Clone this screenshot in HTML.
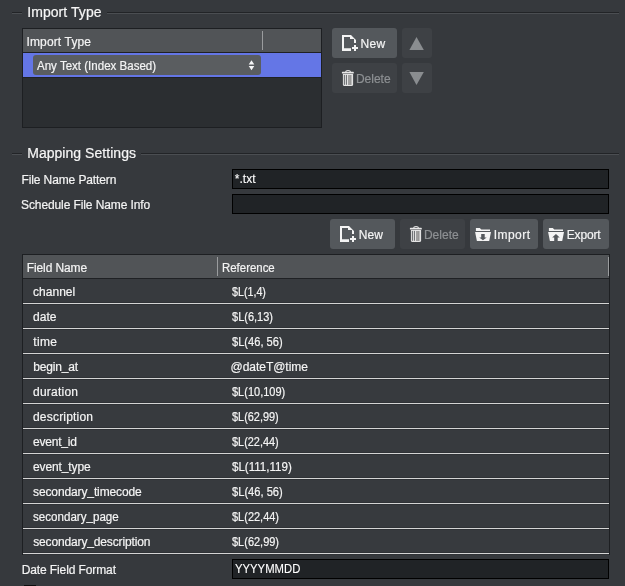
<!DOCTYPE html>
<html><head><meta charset="utf-8">
<style>
html,body{margin:0;padding:0;}
body{width:625px;height:586px;overflow:hidden;background:#36393d;position:relative;font-family:"Liberation Sans",sans-serif;color:#f2f2f2;}
.a{position:absolute;}
.t{position:absolute;white-space:nowrap;line-height:1;transform:translateZ(0);}
.gd{position:absolute;height:1px;background:#222427;}
.gl{position:absolute;height:1px;background:#4b4e52;}
.title{font-size:14px;color:#f6f6f6;-webkit-text-stroke:0.2px currentColor;}
.lbl{font-size:12px;letter-spacing:-0.13px;color:#f4f4f4;-webkit-text-stroke:0.2px currentColor;}
.ref{letter-spacing:-0.45px;}
.btn{position:absolute;border-radius:3px;background:#54585c;}
.btn.dis{background:#3e4145;}
.inp{position:absolute;background:#202326;border:1px solid #000;box-sizing:border-box;}
.sep{position:absolute;left:23px;width:586px;height:1px;background:#d4d4d4;}
.sepd{position:absolute;left:23px;width:586px;height:1px;background:#2f3236;}
.us{position:relative;top:-1px;}
.gray{color:#8d9093;}
</style></head><body>

<!-- Import Type groupbox -->
<div class="gd" style="left:12px;top:12px;width:10px"></div>
<div class="gl" style="left:12px;top:13px;width:10px"></div>
<div class="gd" style="left:107px;top:12px;width:512px"></div>
<div class="gl" style="left:107px;top:13px;width:512px"></div>
<div class="t title" style="left:27.2px;top:5px;letter-spacing:0.07px">Import Type</div>

<!-- table 1 -->
<div class="a" style="left:22px;top:28px;width:300px;height:100px;background:#1d1f22"></div>
<div class="a" style="left:23px;top:29px;width:298px;height:98px;background:#2b2e31"></div>
<div class="a" style="left:23px;top:29px;width:298px;height:23px;background:#515457"></div>
<div class="a" style="left:262px;top:31px;width:1px;height:19px;background:#9a9c9e"></div>
<div class="t lbl" style="left:26.5px;top:36px;letter-spacing:0.14px">Import Type</div>
<div class="a" style="left:23px;top:52px;width:298px;height:1px;background:#1f2124"></div>
<div class="a" style="left:23px;top:53px;width:298px;height:24px;background:#6476e6"></div>
<div class="a" style="left:23px;top:77px;width:298px;height:1px;background:#1f2124"></div>
<div class="a" style="left:33px;top:55px;width:228px;height:20px;background:#5a5d60;border-radius:3px"></div>
<div class="t lbl" style="left:37.0px;top:60px;letter-spacing:0px;transform:translateZ(0) scaleX(0.9618);transform-origin:0 0">Any Text (Index Based)</div>
<svg class="a" style="left:247px;top:59px" width="10" height="12" viewBox="0 0 10 12"><path d="M4.5 1.2 L7.3 5.4 L1.7 5.4 Z M1.7 6.9 L7.3 6.9 L4.5 11.2 Z" fill="#f6f6f6"/></svg>

<!-- buttons top -->
<div class="btn" style="left:332px;top:28px;width:65px;height:30px"></div>
<svg class="a" style="left:342px;top:35px" width="16" height="16" viewBox="0 0 16 16"><path d="M0 0 H9 L14 5 V8 H12 V4 H8 V2 H2 V13.3 H9 V16 H0 Z M10 12 H16 V14 H10 Z M12 10 H14 V16 H12 Z" fill="#f4f4f4"/></svg>
<div class="t lbl" style="left:360.4px;top:38px;letter-spacing:0.4px">New</div>
<div class="btn dis" style="left:402px;top:28px;width:30px;height:30px"></div>
<svg class="a" style="left:409px;top:37px" width="16" height="14"><path d="M7.5 0 L14.8 13 L0.4 13 Z" fill="#8a8d90"/></svg>
<div class="btn dis" style="left:332px;top:63px;width:65px;height:30px"></div>
<svg class="a" style="left:338px;top:66px" width="22" height="24" viewBox="0 0 22 24"><path d="M7.6 5.8 Q7.8 4.5 10.05 4.5 Q12.3 4.5 12.5 5.8" fill="none" stroke="#e6e6e6" stroke-width="1.2"/><rect x="3.9" y="5.7" width="11.9" height="1.9" rx="0.6" fill="#e8e8e8"/><path d="M4.9 8.1 H15.1 V18.4 Q15.1 20 13.5 20 H6.5 Q4.9 20 4.9 18.4 Z" fill="#e4e4e4"/><path d="M6.4 8.9 V18.8 M8.4 8.9 V18.8" stroke="#55585b" stroke-width="0.9"/><rect x="10" y="9" width="3.6" height="10" fill="#a8a8a8"/><path d="M11 9 V19 M12.6 9 V19" stroke="#8a8a8a" stroke-width="0.6"/></svg>
<div class="t lbl gray" style="left:355.9px;top:73px;letter-spacing:0px">Delete</div>
<div class="btn dis" style="left:402px;top:63px;width:30px;height:30px"></div>
<svg class="a" style="left:409px;top:72px" width="16" height="14"><path d="M0.4 0 L14.8 0 L7.5 13 Z" fill="#8a8d90"/></svg>

<!-- Mapping settings groupbox -->
<div class="gd" style="left:12px;top:153px;width:10px"></div>
<div class="gl" style="left:12px;top:154px;width:10px"></div>
<div class="gd" style="left:141px;top:153px;width:478px"></div>
<div class="gl" style="left:141px;top:154px;width:478px"></div>
<div class="t title" style="left:27.2px;top:145.5px;letter-spacing:0.04px">Mapping Settings</div>

<div class="t lbl" style="left:21.5px;top:174px;letter-spacing:-0.112px">File Name Pattern</div>
<div class="inp" style="left:232px;top:169px;width:377px;height:20px"></div>
<div class="t lbl" style="left:234.7px;top:173px;letter-spacing:0.075px;-webkit-text-stroke:0.1px #fff;color:#fff">*.txt</div>
<div class="t lbl" style="left:21px;top:199px;letter-spacing:-0.1px">Schedule File Name Info</div>
<div class="inp" style="left:232px;top:194px;width:377px;height:20px"></div>

<!-- buttons row -->
<div class="btn" style="left:330px;top:219px;width:65px;height:30px"></div>
<svg class="a" style="left:340px;top:226px" width="16" height="16" viewBox="0 0 16 16"><path d="M0 0 H9 L14 5 V8 H12 V4 H8 V2 H2 V13.3 H9 V16 H0 Z M10 12 H16 V14 H10 Z M12 10 H14 V16 H12 Z" fill="#f4f4f4"/></svg>
<div class="t lbl" style="left:358.8px;top:229px;letter-spacing:0.1px">New</div>
<div class="btn dis" style="left:400px;top:219px;width:65px;height:30px"></div>
<svg class="a" style="left:406px;top:222px" width="22" height="24" viewBox="0 0 22 24"><path d="M7.6 5.8 Q7.8 4.5 10.05 4.5 Q12.3 4.5 12.5 5.8" fill="none" stroke="#e6e6e6" stroke-width="1.2"/><rect x="3.9" y="5.7" width="11.9" height="1.9" rx="0.6" fill="#e8e8e8"/><path d="M4.9 8.1 H15.1 V18.4 Q15.1 20 13.5 20 H6.5 Q4.9 20 4.9 18.4 Z" fill="#e4e4e4"/><path d="M6.4 8.9 V18.8 M8.4 8.9 V18.8" stroke="#55585b" stroke-width="0.9"/><rect x="10" y="9" width="3.6" height="10" fill="#a8a8a8"/><path d="M11 9 V19 M12.6 9 V19" stroke="#8a8a8a" stroke-width="0.6"/></svg>
<div class="t lbl gray" style="left:423.9px;top:229px;letter-spacing:0.02px">Delete</div>
<div class="btn" style="left:470px;top:219px;width:68px;height:30px"></div>
<svg class="a" style="left:472px;top:222px" width="24" height="24" viewBox="0 0 24 24"><path d="M3.9 5.9 H7.8 L9.3 7.4 H18 V9 H3.9 Z M3.1 10 H19 L17.2 19 H4.9 Z" fill="#f4f4f4"/><path d="M9.2 12.1 H12.7 V15.4 H14.7 L10.95 18.3 L7.2 15.4 H9.2 Z" fill="#54585c"/></svg>
<div class="t lbl" style="left:493.7px;top:229px;letter-spacing:0.46px">Import</div>
<div class="btn" style="left:543px;top:219px;width:66px;height:30px"></div>
<svg class="a" style="left:545px;top:222px" width="24" height="24" viewBox="0 0 24 24"><path d="M3.9 5.9 H7.8 L9.3 7.4 H18 V9 H3.9 Z M3.1 10 H19 L17.2 19 H4.9 Z" fill="#f4f4f4"/><path d="M10.95 12.1 L14.7 15.4 H12.7 V19.2 H9.2 V15.4 H7.2 Z" fill="#54585c"/></svg>
<div class="t lbl" style="left:566.7px;top:229px;letter-spacing:-0.14px">Export</div>

<!-- table 2 -->
<div class="a" style="left:22px;top:254px;width:588px;height:301px;background:#1d1f22"></div>
<div class="a" style="left:23px;top:255px;width:586px;height:299px;background:#373a3e"></div>
<div class="a" style="left:23px;top:255px;width:586px;height:23px;background:#515457"></div>
<div class="a" style="left:217px;top:257px;width:1px;height:19px;background:#9a9c9e"></div>
<div class="a" style="left:608px;top:257px;width:1px;height:19px;background:#9a9c9e"></div>
<div class="t lbl" style="left:26.8px;top:262px;letter-spacing:-0.122px">Field Name</div>
<div class="t lbl" style="left:221.65px;top:262px;letter-spacing:0px;transform:translateZ(0) scaleX(0.9519);transform-origin:0 0">Reference</div>
<div class="a" style="left:23px;top:278px;width:586px;height:1px;background:#1f2124"></div>

<div class="t lbl" style="left:33.1px;top:286px;letter-spacing:0.017px">channel</div><div class="t lbl ref" style="left:231.5px;top:286px;letter-spacing:0px;transform:translateZ(0) scaleX(0.8922);transform-origin:0 0">$L(1,4)</div><div class="sepd" style="top:302px"></div><div class="sep" style="top:303px"></div><div class="sepd" style="top:304px"></div>
<div class="t lbl" style="left:32.9px;top:311px;letter-spacing:0.1px">date</div><div class="t lbl ref" style="left:231.7px;top:311px;letter-spacing:0px;transform:translateZ(0) scaleX(0.9182);transform-origin:0 0">$L(6,13)</div><div class="sepd" style="top:327px"></div><div class="sep" style="top:328px"></div><div class="sepd" style="top:329px"></div>
<div class="t lbl" style="left:33.3px;top:336px;letter-spacing:0.3px">time</div><div class="t lbl ref" style="left:231.7px;top:336px;letter-spacing:0px;transform:translateZ(0) scaleX(0.926);transform-origin:0 0">$L(46, 56)</div><div class="sepd" style="top:352px"></div><div class="sep" style="top:353px"></div><div class="sepd" style="top:354px"></div>
<div class="t lbl" style="left:33.3px;top:361px;letter-spacing:-0.186px">begin<span class="us">_</span>at</div><div class="t lbl" style="left:230.5px;top:361px;letter-spacing:-0.03px">@dateT@time</div><div class="sepd" style="top:377px"></div><div class="sep" style="top:378px"></div><div class="sepd" style="top:379px"></div>
<div class="t lbl" style="left:33px;top:386px;letter-spacing:0.229px">duration</div><div class="t lbl ref" style="left:231.7px;top:386px;letter-spacing:0px;transform:translateZ(0) scaleX(0.9173);transform-origin:0 0">$L(10,109)</div><div class="sepd" style="top:402px"></div><div class="sep" style="top:403px"></div><div class="sepd" style="top:404px"></div>
<div class="t lbl" style="left:33px;top:411px;letter-spacing:0.2px">description</div><div class="t lbl ref" style="left:231.7px;top:411px;letter-spacing:0px;transform:translateZ(0) scaleX(0.9098);transform-origin:0 0">$L(62,99)</div><div class="sepd" style="top:427px"></div><div class="sep" style="top:428px"></div><div class="sepd" style="top:429px"></div>
<div class="t lbl" style="left:33px;top:436px;letter-spacing:-0.2px">event<span class="us">_</span>id</div><div class="t lbl ref" style="left:231.7px;top:436px;letter-spacing:0px;transform:translateZ(0) scaleX(0.9098);transform-origin:0 0">$L(22,44)</div><div class="sepd" style="top:452px"></div><div class="sep" style="top:453px"></div><div class="sepd" style="top:454px"></div>
<div class="t lbl" style="left:33px;top:461px;letter-spacing:-0.122px">event<span class="us">_</span>type</div><div class="t lbl ref" style="left:231.5px;top:461px;letter-spacing:0px;transform:translateZ(0) scaleX(0.9629);transform-origin:0 0">$L(111,119)</div><div class="sepd" style="top:477px"></div><div class="sep" style="top:478px"></div><div class="sepd" style="top:479px"></div>
<div class="t lbl" style="left:33px;top:486px;letter-spacing:-0.118px">secondary<span class="us">_</span>timecode</div><div class="t lbl ref" style="left:231.7px;top:486px;letter-spacing:0px;transform:translateZ(0) scaleX(0.9278);transform-origin:0 0">$L(46, 56)</div><div class="sepd" style="top:502px"></div><div class="sep" style="top:503px"></div><div class="sepd" style="top:504px"></div>
<div class="t lbl" style="left:33.0px;top:511px;letter-spacing:0px;transform:translateZ(0) scaleX(0.9659);transform-origin:0 0">secondary<span class="us">_</span>page</div><div class="t lbl ref" style="left:231.7px;top:511px;letter-spacing:0px;transform:translateZ(0) scaleX(0.9156);transform-origin:0 0">$L(22,44)</div><div class="sepd" style="top:527px"></div><div class="sep" style="top:528px"></div><div class="sepd" style="top:529px"></div>
<div class="t lbl" style="left:33.2px;top:536px;letter-spacing:-0.145px">secondary<span class="us">_</span>description</div><div class="t lbl ref" style="left:231.7px;top:536px;letter-spacing:0px;transform:translateZ(0) scaleX(0.9156);transform-origin:0 0">$L(62,99)</div><div class="sepd" style="top:552px"></div><div class="sep" style="top:553px"></div><div class="sepd" style="top:554px"></div>

<!-- date field format -->
<div class="t lbl" style="left:21.7px;top:563.5px;letter-spacing:-0.106px">Date Field Format</div>
<div class="inp" style="left:232px;top:559px;width:377px;height:20px"></div>
<div class="t lbl" style="left:234.7px;top:563px;-webkit-text-stroke:0.1px #fff;color:#fff;letter-spacing:0px;transform:translateZ(0) scaleX(0.9421);transform-origin:0 0">YYYYMMDD</div>
<div class="a" style="left:24px;top:585px;width:12px;height:4px;background:#0c0d0e"></div>

</body></html>
